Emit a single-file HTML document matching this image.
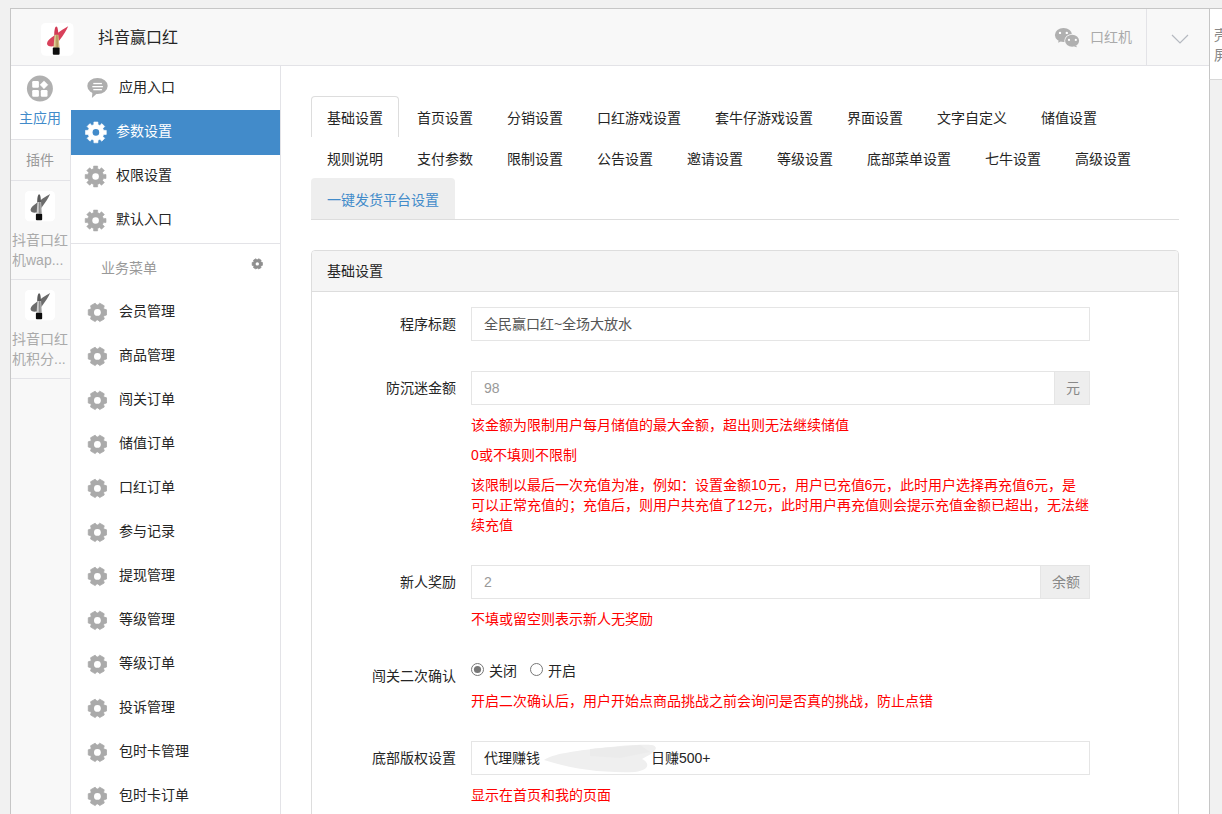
<!DOCTYPE html>
<html lang="zh-CN"><head><meta charset="utf-8"><style>
*{margin:0;padding:0;box-sizing:border-box}
html,body{width:1222px;height:814px;overflow:hidden;background:#f1f1f1;font-family:"Liberation Sans",sans-serif;font-size:14px;color:#252525}
.a{position:absolute}
.t{position:absolute;white-space:nowrap;line-height:20px}
svg{position:absolute;overflow:visible}
#wrap{position:absolute;left:10px;top:8px;width:1200px;height:820px;border:1px solid #c6c6c6;background:#fff}
#hdr{position:absolute;left:11px;top:9px;width:1198px;height:57px;background:#f8f8f8;border-bottom:1px solid #e3e3e7}
#col1{position:absolute;left:11px;top:139px;width:60px;height:760px;background:#f8f8f8;border-right:1px solid #e3e3e7}
#menu{position:absolute;left:71px;top:66px;width:210px;height:760px;background:#fff;border-right:1px solid #e3e3e7}
.tab{position:absolute;height:41px;line-height:20px;padding:11px 15px 9px;border:1px solid transparent;white-space:nowrap;color:#252525}
.inp{position:absolute;left:471px;width:619px;height:34px;border:1px solid #e5e5e5;background:#fff;line-height:20px;padding:6px 12px;white-space:nowrap;color:#555}
.lbl{position:absolute;right:766px;white-space:nowrap;line-height:20px;text-align:right;color:#252525}
.help{position:absolute;left:471px;color:#f00;line-height:20px;white-space:nowrap}
.addon{position:absolute;top:0;right:0;height:32px;background:#eee;border-left:1px solid #e5e5e5;color:#888;line-height:20px;padding:6px 11px}
</style></head><body>
<div id="wrap"></div>
<div id="hdr"></div>
<div id="col1"></div>
<div id="menu"></div>
<svg style="left:41px;top:23px" width="33" height="33"><rect x="0" y="0" width="32.5" height="32.7" rx="4.5" fill="#fff"/>
<g>
<path d="M27.2,3.2 C23,5.5 15,10.8 12.3,13.2 C9.5,15.2 6.3,17.5 6.0,20.2 C5.9,22.8 8.8,23.9 12.6,23.3 C15.5,21.5 17.5,18.5 19.0,16.5 C22,12.5 25.5,7.5 27.2,3.2 Z" fill="#d8415b"/>
<path d="M13.2,12 C13.2,6.5 14.2,3.5 15.3,3.5 C16.5,3.5 17.2,6.5 17.2,12 Z" fill="#d23a55"/>
<path d="M13.6,11.8 L17.4,11.8 L18.6,24.7 L12.4,24.7 Z" fill="#d2bb80"/>
<path d="M15.3,12.2 L16.5,12.2 L16.9,24.5 L15.5,24.5 Z" fill="#9c7f45" opacity="0.75"/>
<path d="M13.9,12.2 L14.4,12.2 L13.6,24.5 L13.0,24.5 Z" fill="#efe2b8" opacity="0.8"/>
<rect x="11.8" y="24.6" width="6.8" height="7.1" rx="1" fill="#0d0d0d"/>
</g></svg>
<div class="t" style="left:98px;top:28px;font-size:16px;color:#252525">抖音赢口红</div>
<svg style="left:1050px;top:22px" width="36" height="30">
<ellipse cx="13.5" cy="13" rx="8.6" ry="7" fill="#b0b0b0"/>
<path d="M8.5,18.5 L8.2,20.8 L10.8,19.6 Z" fill="#b0b0b0"/>
<ellipse cx="22.1" cy="18.7" rx="7.8" ry="6.8" fill="#f8f8f8"/>
<ellipse cx="22.1" cy="18.7" rx="7" ry="6" fill="#b0b0b0"/>
<path d="M26,23.5 L27,25.2 L24,24.6 Z" fill="#b0b0b0"/>
<circle cx="10" cy="10.9" r="1.2" fill="#fff"/><circle cx="16.8" cy="10.9" r="1.2" fill="#fff"/>
<circle cx="19" cy="17.9" r="1.1" fill="#fff"/><circle cx="25.8" cy="17.9" r="1.1" fill="#fff"/>
</svg>
<div class="t" style="left:1090px;top:27px;color:#aaa">口红机</div>
<div class="a" style="left:1146px;top:9px;width:1px;height:56px;background:#e3e3e7"></div>
<svg style="left:1170px;top:32px" width="20" height="14"><path d="M2,3 L10,11 L18,3" fill="none" stroke="#b5b9c0" stroke-width="1.2"/></svg>
<div class="a" style="left:1209px;top:8px;width:20px;height:72px;background:#fff;border-left:1px solid #c6c6c6;border-top:1px solid #c6c6c6;border-bottom:1px solid #d8d8d8"></div>
<div class="a" style="left:1209px;top:80px;width:20px;height:740px;background:#f1f1f1;border-left:1px solid #c6c6c6"></div>
<div class="t" style="left:1214px;top:24px;font-size:14px;color:#888;margin-top:1px">壳<br>屏</div>
<div class="a" style="left:11px;top:66px;width:60px;height:74px;background:#fff;border-bottom:1px solid #e3e3e7"></div>
<svg style="left:24px;top:72px" width="32" height="32">
<circle cx="15.9" cy="16.6" r="13" fill="#b0b0b0"/>
<rect x="8.2" y="9.1" width="6.7" height="6.7" rx="1.2" fill="#fff"/>
<rect x="8.2" y="18.0" width="6.7" height="6.7" rx="1.2" fill="#fff"/>
<rect x="16.8" y="18.0" width="6.7" height="6.7" rx="1.2" fill="#fff"/>
<path d="M20,8.9 L23.9,12.8 L20,16.7 L16.1,12.8 Z" fill="#fff" stroke="#fff" stroke-width="0.5" stroke-linejoin="round"/>
</svg>
<div class="t" style="left:19px;top:108px;font-size:14px;color:#428bca">主应用</div>
<div class="a" style="left:11px;top:180px;width:59px;height:1px;background:#e3e3e7"></div>
<div class="t" style="left:26px;top:150px;font-size:14px;color:#999">插件</div>
<svg style="left:25px;top:191px" width="33" height="33" viewBox="0 0 33 33"><g transform="scale(0.923)"><rect x="0" y="0" width="32.5" height="32.7" rx="4.5" fill="#fff"/>
<g>
<path d="M27.2,3.2 C23,5.5 15,10.8 12.3,13.2 C9.5,15.2 6.3,17.5 6.0,20.2 C5.9,22.8 8.8,23.9 12.6,23.3 C15.5,21.5 17.5,18.5 19.0,16.5 C22,12.5 25.5,7.5 27.2,3.2 Z" fill="#6c6c6c"/>
<path d="M13.2,12 C13.2,6.5 14.2,3.5 15.3,3.5 C16.5,3.5 17.2,6.5 17.2,12 Z" fill="#5a5a5a"/>
<path d="M13.6,11.8 L17.4,11.8 L18.6,24.7 L12.4,24.7 Z" fill="#bdbdbd"/>
<path d="M15.3,12.2 L16.5,12.2 L16.9,24.5 L15.5,24.5 Z" fill="#6a6a6a" opacity="0.75"/>
<path d="M13.9,12.2 L14.4,12.2 L13.6,24.5 L13.0,24.5 Z" fill="#eee" opacity="0.8"/>
<rect x="11.8" y="24.6" width="6.8" height="7.1" rx="1" fill="#0d0d0d"/>
</g></g></svg>
<div class="t" style="left:12px;top:230px;font-size:14px;color:#aaa;line-height:20px">抖音口红<br>机wap...</div>
<div class="a" style="left:11px;top:279px;width:59px;height:1px;background:#e3e3e7"></div>
<svg style="left:25px;top:290px" width="33" height="33" viewBox="0 0 33 33"><g transform="scale(0.923)"><rect x="0" y="0" width="32.5" height="32.7" rx="4.5" fill="#fff"/>
<g>
<path d="M27.2,3.2 C23,5.5 15,10.8 12.3,13.2 C9.5,15.2 6.3,17.5 6.0,20.2 C5.9,22.8 8.8,23.9 12.6,23.3 C15.5,21.5 17.5,18.5 19.0,16.5 C22,12.5 25.5,7.5 27.2,3.2 Z" fill="#6c6c6c"/>
<path d="M13.2,12 C13.2,6.5 14.2,3.5 15.3,3.5 C16.5,3.5 17.2,6.5 17.2,12 Z" fill="#5a5a5a"/>
<path d="M13.6,11.8 L17.4,11.8 L18.6,24.7 L12.4,24.7 Z" fill="#bdbdbd"/>
<path d="M15.3,12.2 L16.5,12.2 L16.9,24.5 L15.5,24.5 Z" fill="#6a6a6a" opacity="0.75"/>
<path d="M13.9,12.2 L14.4,12.2 L13.6,24.5 L13.0,24.5 Z" fill="#eee" opacity="0.8"/>
<rect x="11.8" y="24.6" width="6.8" height="7.1" rx="1" fill="#0d0d0d"/>
</g></g></svg>
<div class="t" style="left:12px;top:329px;font-size:14px;color:#aaa;line-height:20px">抖音口红<br>机积分...</div>
<div class="a" style="left:11px;top:378px;width:59px;height:1px;background:#e3e3e7"></div>
<div class="a" style="left:71px;top:110px;width:209px;height:45px;background:#428bca"></div>
<svg style="left:84px;top:72px" width="28" height="28">
<ellipse cx="13.5" cy="14" rx="10.2" ry="8" fill="#aeaeae"/>
<path d="M8.5,19.5 L7.9,26 L13.5,21 Z" fill="#aeaeae"/>
<rect x="9.3" y="10.9" width="8.6" height="1.3" fill="#fff"/>
<rect x="8.3" y="14" width="10.6" height="1.3" fill="#fff"/>
<rect x="9.3" y="17" width="8.6" height="1.3" fill="#fff"/>
</svg>
<div class="t" style="left:119px;top:77px">应用入口</div>
<svg style="left:0;top:0" width="1" height="1"><path d="M103.63,130.33L106.31,130.38L106.31,134.42L103.63,134.47A8.0,8.0 0 0 1 102.83,136.40L104.69,138.33L101.83,141.19L99.90,139.33A8.0,8.0 0 0 1 97.97,140.13L97.92,142.81L93.88,142.81L93.83,140.13A8.0,8.0 0 0 1 91.90,139.33L89.97,141.19L87.11,138.33L88.97,136.40A8.0,8.0 0 0 1 88.17,134.47L85.49,134.42L85.49,130.38L88.17,130.33A8.0,8.0 0 0 1 88.97,128.40L87.11,126.47L89.97,123.61L91.90,125.47A8.0,8.0 0 0 1 93.83,124.67L93.88,121.99L97.92,121.99L97.97,124.67A8.0,8.0 0 0 1 99.90,125.47L101.83,123.61L104.69,126.47L102.83,128.40A8.0,8.0 0 0 1 103.63,130.33Z" fill="#fff" stroke="#fff" stroke-width="0.6" stroke-linejoin="round"/><circle cx="95.9" cy="132.4" r="3.3" fill="#428bca"/><path d="M103.33,174.43L106.01,174.48L106.01,178.52L103.33,178.57A8.0,8.0 0 0 1 102.53,180.50L104.39,182.43L101.53,185.29L99.60,183.43A8.0,8.0 0 0 1 97.67,184.23L97.62,186.91L93.58,186.91L93.53,184.23A8.0,8.0 0 0 1 91.60,183.43L89.67,185.29L86.81,182.43L88.67,180.50A8.0,8.0 0 0 1 87.87,178.57L85.19,178.52L85.19,174.48L87.87,174.43A8.0,8.0 0 0 1 88.67,172.50L86.81,170.57L89.67,167.71L91.60,169.57A8.0,8.0 0 0 1 93.53,168.77L93.58,166.09L97.62,166.09L97.67,168.77A8.0,8.0 0 0 1 99.60,169.57L101.53,167.71L104.39,170.57L102.53,172.50A8.0,8.0 0 0 1 103.33,174.43Z" fill="#aaa" stroke="#aaa" stroke-width="0.6" stroke-linejoin="round"/><circle cx="95.6" cy="176.5" r="3.3" fill="#fff"/><path d="M103.33,218.43L106.01,218.48L106.01,222.52L103.33,222.57A8.0,8.0 0 0 1 102.53,224.50L104.39,226.43L101.53,229.29L99.60,227.43A8.0,8.0 0 0 1 97.67,228.23L97.62,230.91L93.58,230.91L93.53,228.23A8.0,8.0 0 0 1 91.60,227.43L89.67,229.29L86.81,226.43L88.67,224.50A8.0,8.0 0 0 1 87.87,222.57L85.19,222.52L85.19,218.48L87.87,218.43A8.0,8.0 0 0 1 88.67,216.50L86.81,214.57L89.67,211.71L91.60,213.57A8.0,8.0 0 0 1 93.53,212.77L93.58,210.09L97.62,210.09L97.67,212.77A8.0,8.0 0 0 1 99.60,213.57L101.53,211.71L104.39,214.57L102.53,216.50A8.0,8.0 0 0 1 103.33,218.43Z" fill="#aaa" stroke="#aaa" stroke-width="0.6" stroke-linejoin="round"/><circle cx="95.6" cy="220.5" r="3.3" fill="#fff"/></svg>
<div class="t" style="left:116px;top:121px;color:#fff">参数设置</div>
<div class="t" style="left:116px;top:165px">权限设置</div>
<div class="t" style="left:116px;top:209px">默认入口</div>
<div class="a" style="left:71px;top:243px;width:209px;height:1px;background:#e3e3e7"></div>
<div class="t" style="left:101px;top:257.5px;color:#999">业务菜单</div>
<svg style="left:0;top:0" width="1" height="1"><path d="M260.99,262.10L262.39,262.44L262.39,265.36L260.99,265.70A4.1,4.1 0 0 1 260.70,266.19L261.11,267.58L258.58,269.04L257.59,267.99A4.1,4.1 0 0 1 257.01,267.99L256.02,269.04L253.49,267.58L253.90,266.19A4.1,4.1 0 0 1 253.61,265.70L252.21,265.36L252.21,262.44L253.61,262.10A4.1,4.1 0 0 1 253.90,261.61L253.49,260.22L256.02,258.76L257.01,259.81A4.1,4.1 0 0 1 257.59,259.81L258.58,258.76L261.11,260.22L260.70,261.61A4.1,4.1 0 0 1 260.99,262.10Z" fill="#8e8e8e" stroke="#8e8e8e" stroke-width="0.8" stroke-linejoin="round"/><circle cx="257.3" cy="263.9" r="1.7" fill="#fff"/></svg>
<div class="t" style="left:119px;top:301.0px">会员管理</div>
<div class="t" style="left:119px;top:345.0px">商品管理</div>
<div class="t" style="left:119px;top:389.0px">闯关订单</div>
<div class="t" style="left:119px;top:433.0px">储值订单</div>
<div class="t" style="left:119px;top:477.0px">口红订单</div>
<div class="t" style="left:119px;top:521.0px">参与记录</div>
<div class="t" style="left:119px;top:565.0px">提现管理</div>
<div class="t" style="left:119px;top:609.0px">等级管理</div>
<div class="t" style="left:119px;top:653.0px">等级订单</div>
<div class="t" style="left:119px;top:697.0px">投诉管理</div>
<div class="t" style="left:119px;top:741.0px">包时卡管理</div>
<div class="t" style="left:119px;top:785.0px">包时卡订单</div>
<svg style="left:0;top:0" width="1" height="1"><path d="M104.14,309.11L106.53,309.78L106.53,315.02L104.14,315.69A7.5,7.5 0 0 1 103.62,316.59L104.23,319.00L99.70,321.62L97.92,319.88A7.5,7.5 0 0 1 96.88,319.88L95.10,321.62L90.57,319.00L91.18,316.59A7.5,7.5 0 0 1 90.66,315.69L88.27,315.02L88.27,309.78L90.66,309.11A7.5,7.5 0 0 1 91.18,308.21L90.57,305.80L95.10,303.18L96.88,304.92A7.5,7.5 0 0 1 97.92,304.92L99.70,303.18L104.23,305.80L103.62,308.21A7.5,7.5 0 0 1 104.14,309.11Z" fill="#aaa" stroke="#aaa" stroke-width="0.8" stroke-linejoin="round"/><circle cx="97.4" cy="312.4" r="3.4" fill="#fff"/><path d="M104.14,353.11L106.53,353.78L106.53,359.02L104.14,359.69A7.5,7.5 0 0 1 103.62,360.59L104.23,363.00L99.70,365.62L97.92,363.88A7.5,7.5 0 0 1 96.88,363.88L95.10,365.62L90.57,363.00L91.18,360.59A7.5,7.5 0 0 1 90.66,359.69L88.27,359.02L88.27,353.78L90.66,353.11A7.5,7.5 0 0 1 91.18,352.21L90.57,349.80L95.10,347.18L96.88,348.92A7.5,7.5 0 0 1 97.92,348.92L99.70,347.18L104.23,349.80L103.62,352.21A7.5,7.5 0 0 1 104.14,353.11Z" fill="#aaa" stroke="#aaa" stroke-width="0.8" stroke-linejoin="round"/><circle cx="97.4" cy="356.4" r="3.4" fill="#fff"/><path d="M104.14,397.11L106.53,397.78L106.53,403.02L104.14,403.69A7.5,7.5 0 0 1 103.62,404.59L104.23,407.00L99.70,409.62L97.92,407.88A7.5,7.5 0 0 1 96.88,407.88L95.10,409.62L90.57,407.00L91.18,404.59A7.5,7.5 0 0 1 90.66,403.69L88.27,403.02L88.27,397.78L90.66,397.11A7.5,7.5 0 0 1 91.18,396.21L90.57,393.80L95.10,391.18L96.88,392.92A7.5,7.5 0 0 1 97.92,392.92L99.70,391.18L104.23,393.80L103.62,396.21A7.5,7.5 0 0 1 104.14,397.11Z" fill="#aaa" stroke="#aaa" stroke-width="0.8" stroke-linejoin="round"/><circle cx="97.4" cy="400.4" r="3.4" fill="#fff"/><path d="M104.14,441.11L106.53,441.78L106.53,447.02L104.14,447.69A7.5,7.5 0 0 1 103.62,448.59L104.23,451.00L99.70,453.62L97.92,451.88A7.5,7.5 0 0 1 96.88,451.88L95.10,453.62L90.57,451.00L91.18,448.59A7.5,7.5 0 0 1 90.66,447.69L88.27,447.02L88.27,441.78L90.66,441.11A7.5,7.5 0 0 1 91.18,440.21L90.57,437.80L95.10,435.18L96.88,436.92A7.5,7.5 0 0 1 97.92,436.92L99.70,435.18L104.23,437.80L103.62,440.21A7.5,7.5 0 0 1 104.14,441.11Z" fill="#aaa" stroke="#aaa" stroke-width="0.8" stroke-linejoin="round"/><circle cx="97.4" cy="444.4" r="3.4" fill="#fff"/><path d="M104.14,485.11L106.53,485.78L106.53,491.02L104.14,491.69A7.5,7.5 0 0 1 103.62,492.59L104.23,495.00L99.70,497.62L97.92,495.88A7.5,7.5 0 0 1 96.88,495.88L95.10,497.62L90.57,495.00L91.18,492.59A7.5,7.5 0 0 1 90.66,491.69L88.27,491.02L88.27,485.78L90.66,485.11A7.5,7.5 0 0 1 91.18,484.21L90.57,481.80L95.10,479.18L96.88,480.92A7.5,7.5 0 0 1 97.92,480.92L99.70,479.18L104.23,481.80L103.62,484.21A7.5,7.5 0 0 1 104.14,485.11Z" fill="#aaa" stroke="#aaa" stroke-width="0.8" stroke-linejoin="round"/><circle cx="97.4" cy="488.4" r="3.4" fill="#fff"/><path d="M104.14,529.11L106.53,529.78L106.53,535.02L104.14,535.69A7.5,7.5 0 0 1 103.62,536.59L104.23,539.00L99.70,541.62L97.92,539.88A7.5,7.5 0 0 1 96.88,539.88L95.10,541.62L90.57,539.00L91.18,536.59A7.5,7.5 0 0 1 90.66,535.69L88.27,535.02L88.27,529.78L90.66,529.11A7.5,7.5 0 0 1 91.18,528.21L90.57,525.80L95.10,523.18L96.88,524.92A7.5,7.5 0 0 1 97.92,524.92L99.70,523.18L104.23,525.80L103.62,528.21A7.5,7.5 0 0 1 104.14,529.11Z" fill="#aaa" stroke="#aaa" stroke-width="0.8" stroke-linejoin="round"/><circle cx="97.4" cy="532.4" r="3.4" fill="#fff"/><path d="M104.14,573.11L106.53,573.78L106.53,579.02L104.14,579.69A7.5,7.5 0 0 1 103.62,580.59L104.23,583.00L99.70,585.62L97.92,583.88A7.5,7.5 0 0 1 96.88,583.88L95.10,585.62L90.57,583.00L91.18,580.59A7.5,7.5 0 0 1 90.66,579.69L88.27,579.02L88.27,573.78L90.66,573.11A7.5,7.5 0 0 1 91.18,572.21L90.57,569.80L95.10,567.18L96.88,568.92A7.5,7.5 0 0 1 97.92,568.92L99.70,567.18L104.23,569.80L103.62,572.21A7.5,7.5 0 0 1 104.14,573.11Z" fill="#aaa" stroke="#aaa" stroke-width="0.8" stroke-linejoin="round"/><circle cx="97.4" cy="576.4" r="3.4" fill="#fff"/><path d="M104.14,617.11L106.53,617.78L106.53,623.02L104.14,623.69A7.5,7.5 0 0 1 103.62,624.59L104.23,627.00L99.70,629.62L97.92,627.88A7.5,7.5 0 0 1 96.88,627.88L95.10,629.62L90.57,627.00L91.18,624.59A7.5,7.5 0 0 1 90.66,623.69L88.27,623.02L88.27,617.78L90.66,617.11A7.5,7.5 0 0 1 91.18,616.21L90.57,613.80L95.10,611.18L96.88,612.92A7.5,7.5 0 0 1 97.92,612.92L99.70,611.18L104.23,613.80L103.62,616.21A7.5,7.5 0 0 1 104.14,617.11Z" fill="#aaa" stroke="#aaa" stroke-width="0.8" stroke-linejoin="round"/><circle cx="97.4" cy="620.4" r="3.4" fill="#fff"/><path d="M104.14,661.11L106.53,661.78L106.53,667.02L104.14,667.69A7.5,7.5 0 0 1 103.62,668.59L104.23,671.00L99.70,673.62L97.92,671.88A7.5,7.5 0 0 1 96.88,671.88L95.10,673.62L90.57,671.00L91.18,668.59A7.5,7.5 0 0 1 90.66,667.69L88.27,667.02L88.27,661.78L90.66,661.11A7.5,7.5 0 0 1 91.18,660.21L90.57,657.80L95.10,655.18L96.88,656.92A7.5,7.5 0 0 1 97.92,656.92L99.70,655.18L104.23,657.80L103.62,660.21A7.5,7.5 0 0 1 104.14,661.11Z" fill="#aaa" stroke="#aaa" stroke-width="0.8" stroke-linejoin="round"/><circle cx="97.4" cy="664.4" r="3.4" fill="#fff"/><path d="M104.14,705.11L106.53,705.78L106.53,711.02L104.14,711.69A7.5,7.5 0 0 1 103.62,712.59L104.23,715.00L99.70,717.62L97.92,715.88A7.5,7.5 0 0 1 96.88,715.88L95.10,717.62L90.57,715.00L91.18,712.59A7.5,7.5 0 0 1 90.66,711.69L88.27,711.02L88.27,705.78L90.66,705.11A7.5,7.5 0 0 1 91.18,704.21L90.57,701.80L95.10,699.18L96.88,700.92A7.5,7.5 0 0 1 97.92,700.92L99.70,699.18L104.23,701.80L103.62,704.21A7.5,7.5 0 0 1 104.14,705.11Z" fill="#aaa" stroke="#aaa" stroke-width="0.8" stroke-linejoin="round"/><circle cx="97.4" cy="708.4" r="3.4" fill="#fff"/><path d="M104.14,749.11L106.53,749.78L106.53,755.02L104.14,755.69A7.5,7.5 0 0 1 103.62,756.59L104.23,759.00L99.70,761.62L97.92,759.88A7.5,7.5 0 0 1 96.88,759.88L95.10,761.62L90.57,759.00L91.18,756.59A7.5,7.5 0 0 1 90.66,755.69L88.27,755.02L88.27,749.78L90.66,749.11A7.5,7.5 0 0 1 91.18,748.21L90.57,745.80L95.10,743.18L96.88,744.92A7.5,7.5 0 0 1 97.92,744.92L99.70,743.18L104.23,745.80L103.62,748.21A7.5,7.5 0 0 1 104.14,749.11Z" fill="#aaa" stroke="#aaa" stroke-width="0.8" stroke-linejoin="round"/><circle cx="97.4" cy="752.4" r="3.4" fill="#fff"/><path d="M104.14,793.11L106.53,793.78L106.53,799.02L104.14,799.69A7.5,7.5 0 0 1 103.62,800.59L104.23,803.00L99.70,805.62L97.92,803.88A7.5,7.5 0 0 1 96.88,803.88L95.10,805.62L90.57,803.00L91.18,800.59A7.5,7.5 0 0 1 90.66,799.69L88.27,799.02L88.27,793.78L90.66,793.11A7.5,7.5 0 0 1 91.18,792.21L90.57,789.80L95.10,787.18L96.88,788.92A7.5,7.5 0 0 1 97.92,788.92L99.70,787.18L104.23,789.80L103.62,792.21A7.5,7.5 0 0 1 104.14,793.11Z" fill="#aaa" stroke="#aaa" stroke-width="0.8" stroke-linejoin="round"/><circle cx="97.4" cy="796.4" r="3.4" fill="#fff"/></svg>
<div class="a" style="left:311px;top:219px;width:868px;height:1px;background:#ddd"></div>
<div class="tab" style="left:311px;top:96px;width:88px;border:1px solid #ddd;border-bottom:0;border-radius:4px 4px 0 0;background:#fff;">基础设置</div>
<div class="tab" style="left:401px;top:96px;width:88px;">首页设置</div>
<div class="tab" style="left:491px;top:96px;width:88px;">分销设置</div>
<div class="tab" style="left:581px;top:96px;width:116px;">口红游戏设置</div>
<div class="tab" style="left:699px;top:96px;width:130px;">套牛仔游戏设置</div>
<div class="tab" style="left:831px;top:96px;width:88px;">界面设置</div>
<div class="tab" style="left:921px;top:96px;width:102px;">文字自定义</div>
<div class="tab" style="left:1025px;top:96px;width:88px;">储值设置</div>
<div class="tab" style="left:311px;top:137px;width:88px;">规则说明</div>
<div class="tab" style="left:401px;top:137px;width:88px;">支付参数</div>
<div class="tab" style="left:491px;top:137px;width:88px;">限制设置</div>
<div class="tab" style="left:581px;top:137px;width:88px;">公告设置</div>
<div class="tab" style="left:671px;top:137px;width:88px;">邀请设置</div>
<div class="tab" style="left:761px;top:137px;width:88px;">等级设置</div>
<div class="tab" style="left:851px;top:137px;width:116px;">底部菜单设置</div>
<div class="tab" style="left:969px;top:137px;width:88px;">七牛设置</div>
<div class="tab" style="left:1059px;top:137px;width:88px;">高级设置</div>
<div class="tab" style="left:311px;top:178px;width:144px;background:#eee;border-radius:4px 4px 0 0;color:#428bca;">一键发货平台设置</div>
<div class="a" style="left:311px;top:250px;width:868px;height:600px;border:1px solid #ddd;border-radius:4px 4px 0 0;background:#fff"></div>
<div class="a" style="left:312px;top:251px;width:866px;height:41px;background:#f5f5f5;border-bottom:1px solid #ddd;border-radius:3px 3px 0 0"></div>
<div class="t" style="left:327px;top:261px">基础设置</div>
<div class="lbl" style="top:314px">程序标题</div>
<div class="inp" style="top:307px;color:#555">全民赢口红~全场大放水</div>
<div class="lbl" style="top:378px">防沉迷金额</div>
<div class="inp" style="top:371px;color:#999">98<div class="addon" style="width:35px">元</div></div>
<div class="help" style="top:415px">该金额为限制用户每月储值的最大金额，超出则无法继续储值</div>
<div class="help" style="top:445px">0或不填则不限制</div>
<div class="help" style="top:475px">该限制以最后一次充值为准，例如：设置金额10元，用户已充值6元，此时用户选择再充值6元，是<br>可以正常充值的；充值后，则用户共充值了12元，此时用户再充值则会提示充值金额已超出，无法继<br>续充值</div>
<div class="lbl" style="top:572px">新人奖励</div>
<div class="inp" style="top:565px;color:#999">2<div class="addon" style="width:49px">余额</div></div>
<div class="help" style="top:609px">不填或留空则表示新人无奖励</div>
<div class="lbl" style="top:666px">闯关二次确认</div>
<svg style="left:470px;top:662px" width="80" height="16">
<circle cx="7.5" cy="7.5" r="6" fill="#fff" stroke="#777" stroke-width="1"/>
<circle cx="7.5" cy="7.5" r="3.6" fill="#777"/>
<circle cx="66.5" cy="7.5" r="6" fill="#fff" stroke="#777" stroke-width="1"/>
</svg>
<div class="t" style="left:489px;top:661px">关闭</div>
<div class="t" style="left:548px;top:661px">开启</div>
<div class="help" style="top:691px">开启二次确认后，用户开始点商品挑战之前会询问是否真的挑战，防止点错</div>
<div class="lbl" style="top:748px">底部版权设置</div>
<div class="inp" style="top:741px;color:#252525">代理赚钱<span style="display:inline-block;width:111px"></span>日赚500+</div>
<svg style="left:0;top:0" width="1" height="1"><path d="M544,760 C552,754 575,751 600,748 C625,745 645,744 652,745 C660,747 655,753 642,759 C650,763 650,770 635,772 C605,773 575,770 544,760 Z" fill="#efefef"/><path d="M590,749 L640,745 L650,752 L620,758 L590,756 Z" fill="#ebebeb"/></svg>
<div class="help" style="top:785px">显示在首页和我的页面</div>
</body></html>
